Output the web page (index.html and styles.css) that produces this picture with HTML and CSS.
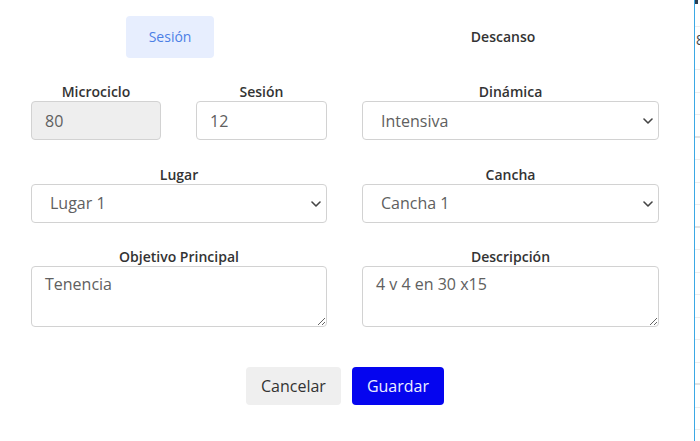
FILE: index.html
```html
<!DOCTYPE html>
<html lang="es">
<head>
<meta charset="utf-8">
<title>Sesión</title>
<link rel="stylesheet" href="styles.css">
</head>
<body>
<div class="page">
  <div class="modal">
    <div class="tabs">
      <button class="tab active" type="button">Sesión</button>
      <button class="tab" type="button">Descanso</button>
    </div>
    <form class="form">
      <div class="field">
        <label class="label">Microciclo</label>
        <input class="control" type="text" value="80" disabled>
      </div>
      <div class="field">
        <label class="label">Sesión</label>
        <input class="control" type="text" value="12">
      </div>
      <div class="field">
        <label class="label">Dinámica</label>
        <div class="select-wrap">
          <select class="control select"><option>Intensiva</option></select>
          <svg class="chev" width="10" height="6" viewBox="0 0 10 6"><path d="M1 1 L5 5 L9 1" fill="none" stroke="#444" stroke-width="1.6" stroke-linecap="round" stroke-linejoin="round"/></svg>
        </div>
      </div>
      <div class="field span2">
        <label class="label">Lugar</label>
        <div class="select-wrap">
          <select class="control select"><option>Lugar 1</option></select>
          <svg class="chev" width="10" height="6" viewBox="0 0 10 6"><path d="M1 1 L5 5 L9 1" fill="none" stroke="#444" stroke-width="1.6" stroke-linecap="round" stroke-linejoin="round"/></svg>
        </div>
      </div>
      <div class="field">
        <label class="label">Cancha</label>
        <div class="select-wrap">
          <select class="control select"><option>Cancha 1</option></select>
          <svg class="chev" width="10" height="6" viewBox="0 0 10 6"><path d="M1 1 L5 5 L9 1" fill="none" stroke="#444" stroke-width="1.6" stroke-linecap="round" stroke-linejoin="round"/></svg>
        </div>
      </div>
      <div class="field span2">
        <label class="label">Objetivo Principal</label>
        <textarea class="control area">Tenencia</textarea>
      </div>
      <div class="field">
        <label class="label">Descripción</label>
        <textarea class="control area">4 v 4 en 30 x15</textarea>
      </div>
    </form>
    <div class="actions">
      <button class="btn btn-light" type="button">Cancelar</button>
      <button class="btn btn-primary" type="button">Guardar</button>
    </div>
  </div>
  <div class="side">
    <div class="side-top"></div>
    <div class="side-row first">8</div>
    <div class="side-row"></div>
    <div class="side-row"></div>
    <div class="side-row thick"></div>
    <div class="side-row"></div>
    <div class="side-row"></div>
    <div class="side-row"></div>
    <div class="side-row thick"></div>
    <div class="side-row"></div>
    <div class="side-row"></div>
    <div class="side-row"></div>
    <div class="side-row"></div>
    <div class="side-row"></div>
    <div class="side-row"></div>
    <div class="side-row thick"></div>
    <div class="side-row"></div>
    <div class="side-row"></div>
    <div class="side-row"></div>
    <div class="side-row"></div>
  </div>
</div>
</body>
</html>
```

FILE: styles.css
```css
* { box-sizing: border-box; }
html, body {
  margin: 0;
  padding: 0;
  background: #fff;
  font-family: "Open Sans", "Noto Sans", sans-serif;
  color: #333;
  overflow: hidden;
}
.page {
  display: flex;
  width: 700px;
  height: 441px;
}
.modal {
  width: 694px;
  flex: none;
  padding: 16px 35px 0 31px;
}
.tabs {
  display: flex;
  justify-content: space-around;
  width: 666px;
  margin-left: -22px;
}
.tab {
  height: 42px;
  padding: 0 23px;
  border: 0;
  border-radius: 4px;
  background: transparent;
  font-family: inherit;
  font-size: 14px;
  font-weight: 600;
  color: #333;
  padding-bottom: 1px;
}
.tab.active {
  background: #e7eefe;
  color: #4c7fe6;
  font-weight: 500;
}
.form {
  display: grid;
  grid-template-columns: 130px 131px 297px;
  column-gap: 35px;
  row-gap: 24.5px;
  margin-top: 24px;
}
.field {
  display: flex;
  flex-direction: column;
}
.span2 { grid-column: span 2; }
.label {
  text-align: center;
  font-size: 14px;
  line-height: 19px;
  font-weight: 600;
  color: #333;
}
.control {
  width: 100%;
  height: 39px;
  border: 1px solid #d2d2d2;
  border-radius: 4px;
  padding: 0 13px;
  font-family: inherit;
  font-size: 16px;
  color: #606060;
  background: #fff;
  outline: none;
}
.control:disabled {
  background: #eeeeee;
  color: #606060;
}
.select-wrap {
  position: relative;
}
.select {
  appearance: none;
  -webkit-appearance: none;
  padding-left: 18px;
  height: 39px;
}
.chev {
  position: absolute;
  right: 6px;
  top: 17px;
  pointer-events: none;
}
.area {
  height: 61px;
  padding: 6px 13px;
  line-height: 22px;
  resize: both;
}
.actions {
  display: flex;
  justify-content: center;
  gap: 11px;
  margin-top: 40px;
}
.btn {
  height: 38px;
  border: 0;
  border-radius: 4px;
  padding: 0 15px;
  font-family: inherit;
  font-size: 16px;
}
.btn-light {
  background: #efefef;
  color: #333;
}
.btn-primary {
  background: #0505ef;
  color: #eef0ff;
}
.side {
  flex: 1;
  border-left: 1.5px solid #3ba8e4;
  background: #fff;
  overflow: hidden;
}
.side-top {
  height: 4px;
  width: 3px;
  background: #2c3e50;
}
.side-row {
  height: 22.5px;
  border-bottom: 1px solid #ececec;
  font-size: 14px;
  color: #444;
  line-height: 22px;
  padding-left: 1px;
}
.side-row.first {
  height: 44px;
  line-height: 26px;
  border-top: 1px solid #ececec;
  margin-top: 22px;
}
.side-row.thick {
  border-bottom: 2px solid #e2e2e2;
}
```
